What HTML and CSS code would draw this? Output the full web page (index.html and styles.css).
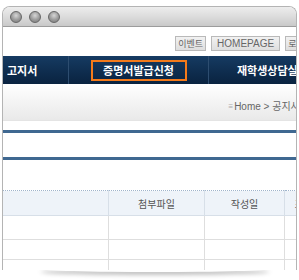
FILE: index.html
```
<!DOCTYPE html>
<html lang="ko">
<head>
  <meta charset="UTF-8" />
  <title>공지사항</title>
  <link rel="stylesheet" href="styles.css">
</head>
<body>
  <div class="window">
    <div class="titlebar">
      <span class="dot"></span>
      <span class="dot"></span>
      <span class="dot"></span>
    </div>

    <div class="page">
      <div class="top-menu">
        <span class="top-btn">이벤트</span>
        <span class="top-btn en">HOMEPAGE</span>
        <span class="top-btn">로그인</span>
      </div>

      <div class="gnb">
        <div class="gnb-item first">고지서</div>
        <div class="gnb-item active"><span>증명서발급신청</span></div>
        <div class="gnb-item last">재학생상담실</div>
      </div>

      <div class="location">
        <span class="loc-icon">≡</span>Home &gt; 공지사항
      </div>

      <div class="title-box"></div>

      <table class="board">
        <thead>
          <tr>
            <th class="c-title"></th>
            <th class="c-file">첨부파일</th>
            <th class="c-date">작성일</th>
            <th class="c-hit">조회</th>
          </tr>
        </thead>
        <tbody>
          <tr class="r1"><td></td><td></td><td></td><td></td></tr>
          <tr class="r2"><td></td><td></td><td></td><td></td></tr>
          <tr class="r3"><td></td><td></td><td></td><td></td></tr>
        </tbody>
      </table>
    </div>
  </div>
  <div class="curl"></div>
</body>
</html>
```

FILE: styles.css
```
body {
  margin: 0;
  background: #fff;
  font-family: "Noto Sans CJK KR", "Liberation Sans", sans-serif;
  width: 299px;
  height: 280px;
  overflow: hidden;
  position: relative;
}

.window {
  margin: 6px 0 0 2px;
  width: 293px;
  height: 263px;
  border: 1px solid #b4b4b4;
  border-bottom: none;
  border-radius: 8px 8px 0 0;
  overflow: hidden;
  background: #fff;
  position: relative;
  z-index: 1;
}

.titlebar {
  height: 19px;
  background: linear-gradient(#ededed 0%, #dcdcdc 50%, #c9c9c9 100%);
  border-bottom: 1px solid #9c9c9c;
  display: flex;
  align-items: center;
  padding-left: 7px;
  gap: 7px;
}

.dot {
  width: 10px;
  height: 10px;
  border-radius: 50%;
  border: 1px solid #666;
  background: radial-gradient(circle at 50% 35%, #d6d6d6 0%, #9a9a9a 55%, #7a7a7a 100%);
}

.page {
  width: 320px;
}

.top-menu {
  height: 24px;
  display: flex;
  justify-content: flex-end;
  align-items: flex-end;
  gap: 5px;
  padding-right: 7px;
}

.top-btn {
  height: 13px;
  line-height: 13px;
  padding: 0 2px;
  background: linear-gradient(#f2f2f2, #dedede);
  border: 1px solid #b9b9b9;
  color: #666;
  font-size: 9px;
}

.top-btn.en {
  font-family: "Liberation Sans", sans-serif;
  font-size: 10px;
  padding: 0 5px;
}

.gnb {
  margin-top: 5px;
  height: 28px;
  background: linear-gradient(#163b62 0%, #0e2c4d 60%, #0a2340 100%);
  display: flex;
  align-items: center;
  color: #fff;
  font-size: 11px;
  font-weight: bold;
}

.gnb-item {
  height: 100%;
  box-sizing: border-box;
  display: flex;
  align-items: center;
  justify-content: center;
  border-right: 1px solid #2d4d70;
}

.gnb-item.first {
  width: 66px;
  justify-content: flex-start;
  padding-left: 4px;
}

.gnb-item.active {
  width: 140px;
}

.gnb-item.active span {
  border: 2px solid #f47a1a;
  width: 92px;
  height: 17px;
  display: flex;
  align-items: center;
  justify-content: center;
}

.gnb-item.last {
  border-right: none;
  justify-content: flex-start;
  padding-left: 28px;
}

.location {
  height: 37px;
  box-sizing: border-box;
  background: linear-gradient(#ffffff 0%, #f6f6f6 40%, #e9e9e9 100%);
  border-bottom: 1px solid #e4e4e4;
  display: flex;
  align-items: flex-end;
  justify-content: flex-end;
  padding: 0 14px 7px 0;
  font-size: 10px;
  line-height: 12px;
  color: #666;
  font-family: "Liberation Sans", "Noto Sans CJK KR", sans-serif;
}

.loc-icon {
  color: #aaa;
  font-size: 8px;
  margin-right: 1px;
}

.title-box {
  margin-top: 9px;
  height: 24px;
  border-top: 3px solid #3f6891;
  border-bottom: 3px solid #3f6891;
}

.board {
  margin-top: 30px;
  border-collapse: collapse;
  table-layout: fixed;
  width: 320px;
  font-size: 10px;
  color: #555;
}

.board th {
  height: 24px;
  padding: 0;
  background: #eef3f9;
  border-top: 1px dotted #9fb4cc;
  border-bottom: 1px solid #d7dfe8;
  border-left: 1px solid #d7dfe8;
  font-weight: normal;
}

.board th:first-child,
.board td:first-child {
  border-left: none;
}

.board td {
  padding: 0;
  border-bottom: 1px solid #dedede;
  border-left: 1px solid #dedede;
}

.c-title { width: 105px; }
.c-file { width: 95px; }
.c-date { width: 79px; }

.r1 td { height: 23px; }
.r2 td { height: 19px; }
.r3 td { height: 10px; }

.curl {
  position: absolute;
  left: 40px;
  top: 266px;
  width: 230px;
  height: 6px;
  border-radius: 50%;
  box-shadow: 0 3px 4px rgba(0,0,0,0.25);
}
```
